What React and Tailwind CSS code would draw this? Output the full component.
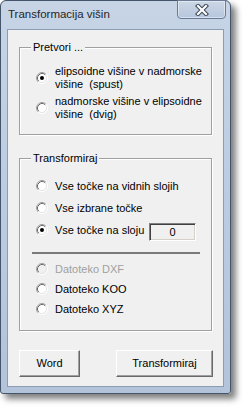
import React, { useState } from "react";

const FONT = { fontFamily: '"Liberation Sans", Arial, sans-serif' };

function Radio({ checked, disabled }) {
  return (
    <svg width="12" height="12" viewBox="0 0 12 12" className="shrink-0">
      <circle cx="6" cy="6" r="5" fill={disabled ? "#f0f0f0" : "#ffffff"} />
      <path d="M2.11 9.89 A5.5 5.5 0 0 1 9.89 2.11" fill="none" stroke="#a0a0a0" strokeWidth="1" />
      <path d="M9.89 2.11 A5.5 5.5 0 0 1 2.11 9.89" fill="none" stroke="#ffffff" strokeWidth="1" />
      <path d="M2.82 9.18 A4.5 4.5 0 0 1 9.18 2.82" fill="none" stroke="#696969" strokeWidth="1" />
      <path d="M9.18 2.82 A4.5 4.5 0 0 1 2.82 9.18" fill="none" stroke="#e3e3e3" strokeWidth="1" />
      {checked && <circle cx="6" cy="6" r="2" fill="#000000" />}
    </svg>
  );
}

function Group({ label, className, children }) {
  return (
    <div
      className={`relative ml-[11px] w-[193px] border border-[#a0a0a0] shadow-[inset_1px_1px_0_#ffffff,1px_1px_0_#ffffff] ${className}`}
    >
      <span className="absolute left-[11px] top-[-8px] bg-[#f0f0f0] px-[2px] text-[11px] leading-[14px] text-black">
        {label}
      </span>
      {children}
    </div>
  );
}

function Button({ children, className }) {
  return (
    <button
      className={`h-[27px] border border-t-white border-l-white border-r-[#696969] border-b-[#696969] bg-[#f0f0f0] text-[11px] text-black shadow-[inset_-1px_-1px_0_#a0a0a0] ${className}`}
    >
      {children}
    </button>
  );
}

export default function App() {
  const [mode, setMode] = useState(0);
  const [target, setTarget] = useState(2);

  return (
    <div className="w-[243px] h-[408px] bg-white" style={FONT}>
      <div className="relative w-[231px] h-[394px] rounded-t-[6px] rounded-b-[3px] border border-[#44546a] bg-gradient-to-b from-[#c6d4e6] to-[#b2c3da] shadow-[5px_5px_6px_rgba(0,0,0,0.5)] px-[6px] flex flex-col">
        {/* title bar */}
        <div className="h-[28px] shrink-0 flex items-start pt-[6px] pl-[1px]">
          <span className="text-[11.5px] leading-[14px] text-[#262626]">Transformacija višin</span>
        </div>
        <div className="absolute right-[4px] top-[-1px] w-[49px] h-[19px] rounded-b-[4px] border border-[#6a7c95] bg-gradient-to-b from-[#cbd7e6] to-[#b6c6dc] shadow-[inset_0_0_0_1px_rgba(255,255,255,0.45)] flex items-center justify-center">
          <svg width="14" height="12" viewBox="0 0 14 12">
            <path d="M3 2 L11 10 M11 2 L3 10" stroke="#3b4656" strokeWidth="4.2" strokeLinecap="square" />
            <path d="M3 2 L11 10 M11 2 L3 10" stroke="#ffffff" strokeWidth="2.2" strokeLinecap="square" />
          </svg>
        </div>

        {/* client area */}
        <div className="h-[358px] shrink-0 border border-[#8b9cb3] bg-[#f0f0f0] flex flex-col text-black">
          <Group label="Pretvori ..." className="mt-[17px] h-[88px] pt-[17px]">
            <div className="flex flex-col gap-[4px]">
              <label className="flex items-center" onClick={() => setMode(0)}>
                <span className="ml-[16px]"><Radio checked={mode === 0} /></span>
                <span className="ml-[7px] text-[11px] leading-[13px] whitespace-pre">
                  {"elipsoidne višine v nadmorske\nvišine  (spust)"}
                </span>
              </label>
              <label className="flex items-center" onClick={() => setMode(1)}>
                <span className="ml-[16px]"><Radio checked={mode === 1} /></span>
                <span className="ml-[7px] text-[11px] leading-[13px] whitespace-pre">
                  {"nadmorske višine v elipsoidne\nvišine  (dvig)"}
                </span>
              </label>
            </div>
          </Group>

          <Group label="Transformiraj" className="mt-[23px] h-[173px] pt-[16px]">
            <div className="flex flex-col">
              <label className="h-[22px] flex items-center" onClick={() => setTarget(0)}>
                <span className="ml-[16px]"><Radio checked={target === 0} /></span>
                <span className="ml-[7px] text-[11px]">Vse točke na vidnih slojih</span>
              </label>
              <label className="h-[22px] flex items-center" onClick={() => setTarget(1)}>
                <span className="ml-[16px]"><Radio checked={target === 1} /></span>
                <span className="ml-[7px] text-[11px]">Vse izbrane točke</span>
              </label>
              <div className="h-[22px] flex items-center">
                <span className="ml-[16px]" onClick={() => setTarget(2)}><Radio checked={target === 2} /></span>
                <span className="ml-[7px] w-[94px] text-[11px]">Vse točke na sloju</span>
                <div className="self-end w-[47px] h-[18px] border border-t-[#808080] border-l-[#808080] border-r-[#ffffff] border-b-[#ffffff] shadow-[inset_1px_1px_0_#404040,inset_-1px_-1px_0_#d4d0c8] bg-[#f0f0f0] flex items-center justify-center text-[11px]">
                  0
                </div>
              </div>
              <div className="mt-[11px] ml-[12px] w-[168px] h-[2px] bg-[#7a7a7a]" />
              <div className="mt-[5px] h-[20px] flex items-center">
                <span className="ml-[16px]"><Radio disabled /></span>
                <span className="ml-[7px] text-[11px] text-[#a0a0a0]">Datoteko DXF</span>
              </div>
              <label className="h-[20px] flex items-center" onClick={() => setTarget(4)}>
                <span className="ml-[16px]"><Radio checked={target === 4} /></span>
                <span className="ml-[7px] text-[11px]">Datoteko KOO</span>
              </label>
              <label className="h-[20px] flex items-center" onClick={() => setTarget(5)}>
                <span className="ml-[16px]"><Radio checked={target === 5} /></span>
                <span className="ml-[7px] text-[11px]">Datoteko XYZ</span>
              </label>
            </div>
          </Group>

          <div className="mt-[19px] ml-[11px] flex gap-[36px]">
            <Button className="w-[61px]">Word</Button>
            <Button className="w-[97px]">Transformiraj</Button>
          </div>
        </div>
      </div>
    </div>
  );
}
